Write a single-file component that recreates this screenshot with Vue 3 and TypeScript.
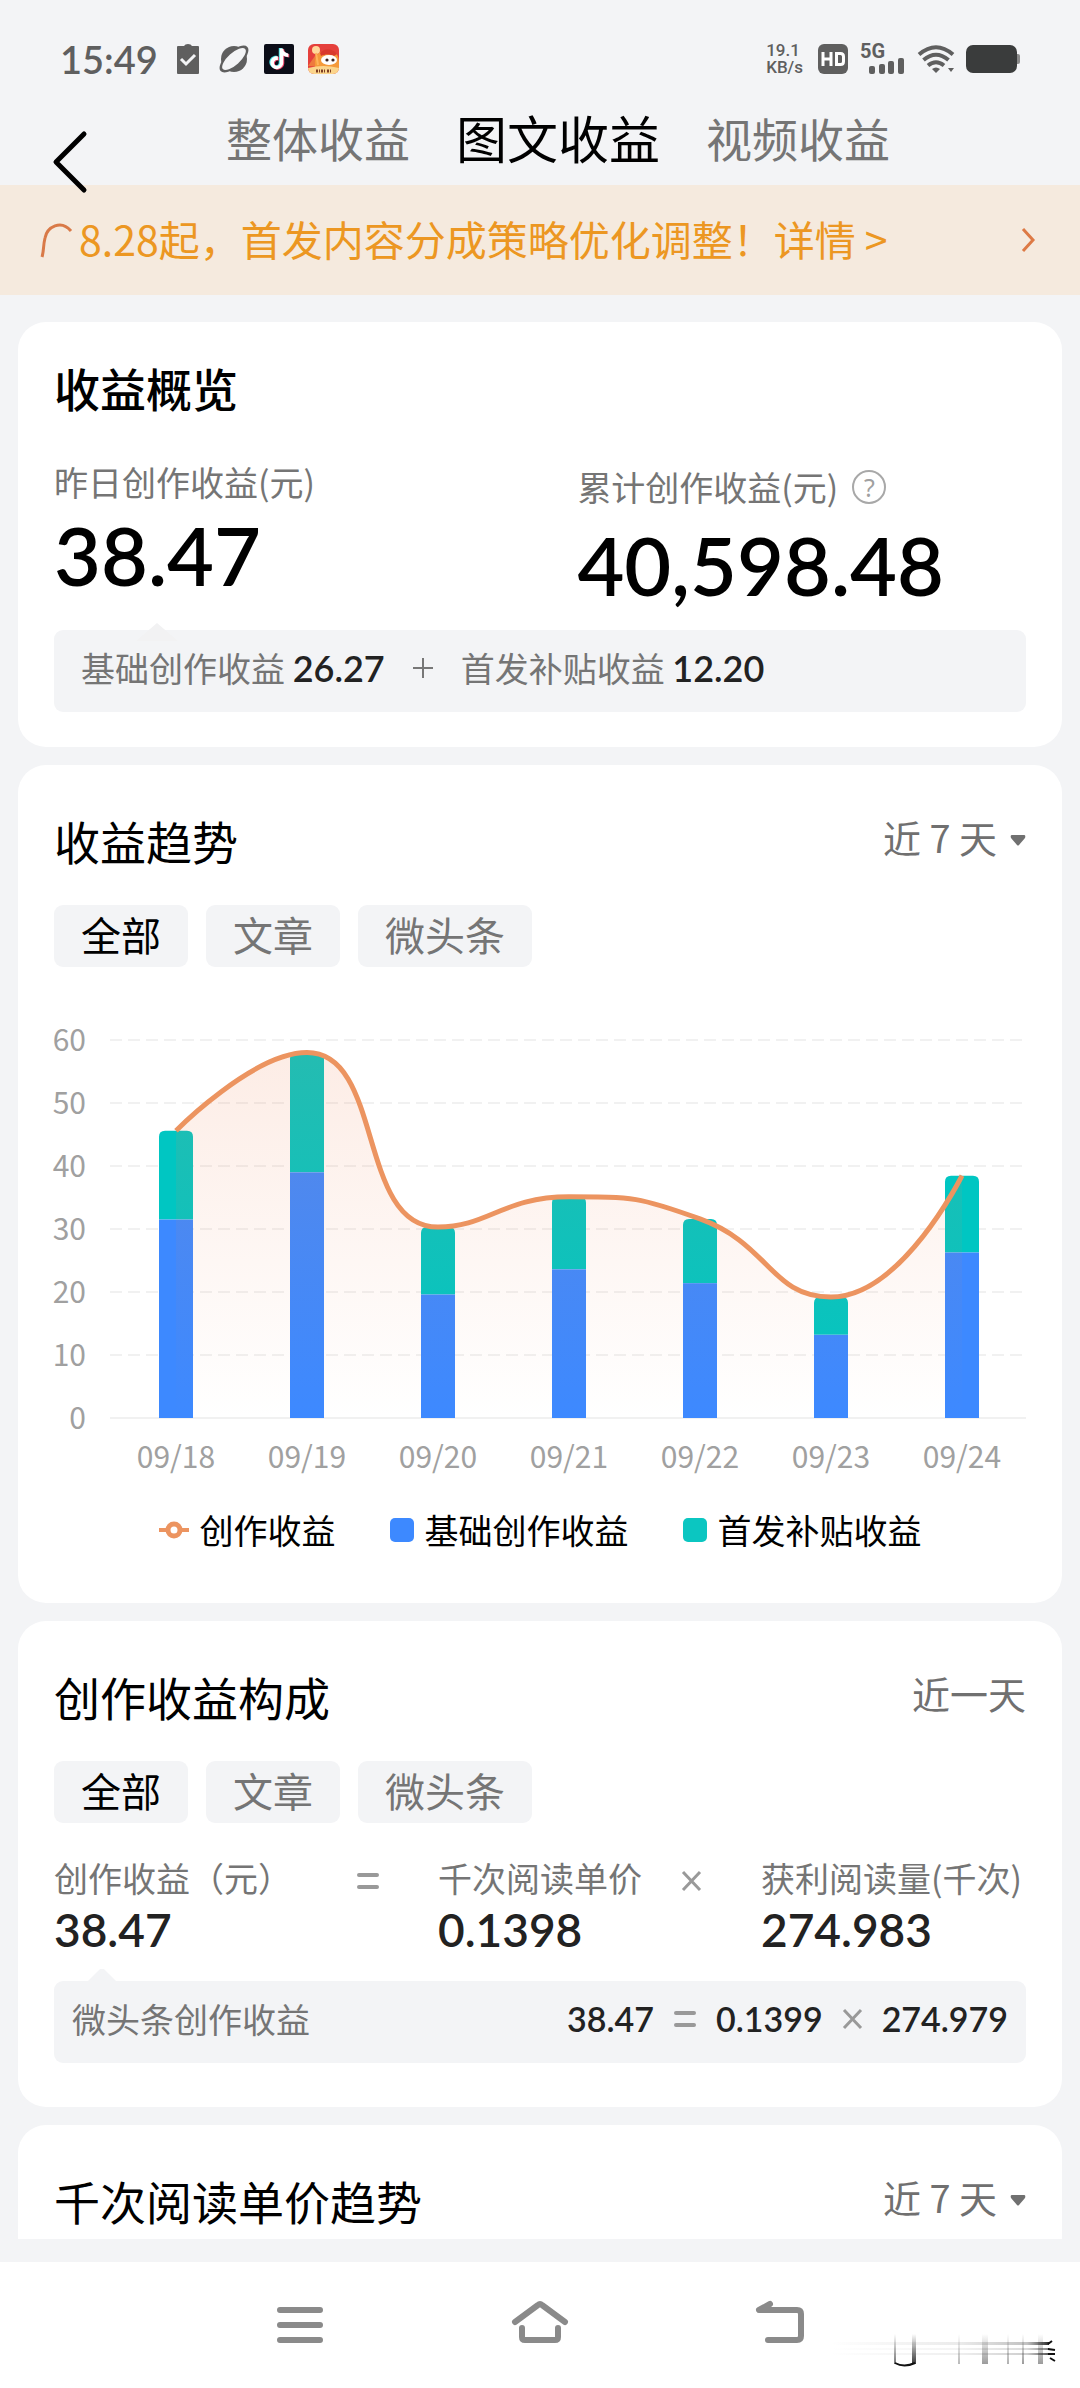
<script setup lang="ts">
import { computed, ref } from 'vue'

interface Day {
  date: string
  base: number
  bonus: number
}

interface Point {
  x: number
  y: number
}

const tabs = ['整体收益', '图文收益', '视频收益']
const activeTab = ref('图文收益')

const kinds = ['全部', '文章', '微头条']
const trendKind = ref('全部')
const mixKind = ref('全部')
const trendRange = ref('7')
const priceRange = ref('7')

const days: Day[] = [
  { date: '09/18', base: 31.5, bonus: 14.1 },
  { date: '09/19', base: 39, bonus: 19 },
  { date: '09/20', base: 19.6, bonus: 10.7 },
  { date: '09/21', base: 23.6, bonus: 11.5 },
  { date: '09/22', base: 21.4, bonus: 10.2 },
  { date: '09/23', base: 13.2, bonus: 6 },
  { date: '09/24', base: 26.27, bonus: 12.2 },
]
const ticks = [60, 50, 40, 30, 20, 10]

const floorY = 408
const unit = 6.3
const barWidth = 34
const toY = (value: number): number => floorY - value * unit
const toX = (index: number): number => 122 + index * 131

const points = computed<Point[]>(() =>
  days.map((d, i) => ({ x: toX(i), y: toY(d.base + d.bonus) })),
)

const clamp = (v: number, a: number, b: number): number =>
  Math.min(Math.max(v, Math.min(a, b)), Math.max(a, b))

// Smooth line whose control points never leave the span of the neighbouring values
const linePath = computed<string>(() => {
  const p = points.value
  let out = `M${p[0].x} ${p[0].y}`
  let from: Point = p[0]
  for (let i = 1; i < p.length; i++) {
    const prev = p[i - 1]
    const cur = p[i]
    const next = p[i + 1]
    let before: Point = cur
    let after: Point = cur
    if (next) {
      const lenPrev = Math.hypot(cur.x - prev.x, cur.y - prev.y)
      const lenNext = Math.hypot(next.x - cur.x, next.y - cur.y)
      const ratio = lenNext / (lenNext + lenPrev)
      after = {
        x: clamp(cur.x + (next.x - prev.x) * 0.5 * ratio, cur.x, next.x),
        y: clamp(cur.y + (next.y - prev.y) * 0.5 * ratio, cur.y, next.y),
      }
      before = {
        x: clamp(cur.x - ((after.x - cur.x) * lenPrev) / lenNext, cur.x, prev.x),
        y: clamp(cur.y - ((after.y - cur.y) * lenPrev) / lenNext, cur.y, prev.y),
      }
      after = {
        x: cur.x + ((cur.x - before.x) * lenNext) / lenPrev,
        y: cur.y + ((cur.y - before.y) * lenNext) / lenPrev,
      }
    }
    out += `C${from.x} ${from.y} ${before.x} ${before.y} ${cur.x} ${cur.y}`
    from = after
  }
  return out
})

const areaPath = computed<string>(
  () => `${linePath.value}L${toX(days.length - 1)} ${floorY}L${toX(0)} ${floorY}Z`,
)

const topBar = (d: Day, i: number): string => {
  const x = toX(i) - barWidth / 2
  const top = toY(d.base + d.bonus)
  const bottom = toY(d.base)
  return `M${x} ${bottom}V${top + 6}q0 -6 6 -6h${barWidth - 12}q6 0 6 6V${bottom}Z`
}
</script>

<template>
  <div class="app">
    <div class="status">
      <div class="status-side">
        <span class="clock">15:49</span>
        <svg class="clip" width="22" height="30" viewBox="0 0 22 30" aria-hidden="true">
          <path d="M1 2h6q1-2 4-2t4 2h6q1 0 1 1v26q0 1-1 1H1q-1 0-1-1V3q0-1 1-1z" fill="#5f5f5f" />
          <path d="M4 15l5 5 9-9" fill="none" stroke="#f3f4f6" stroke-width="3" />
        </svg>
        <svg class="planet" width="30" height="30" viewBox="0 0 30 30" aria-hidden="true">
          <circle cx="15" cy="15" r="13" fill="#5f5f5f" />
          <ellipse cx="15" cy="15" rx="18" ry="8" transform="rotate(-42 15 15)" fill="#5f5f5f" />
          <ellipse cx="15" cy="15" rx="15" ry="6" transform="rotate(-42 15 15)" fill="#f3f4f6" />
        </svg>
        <svg class="tok" width="30" height="30" viewBox="0 0 30 30" aria-hidden="true">
          <defs>
            <path
              id="note"
              d="M12.53.02C13.84 0 15.14.01 16.44 0c.08 1.53.63 3.09 1.75 4.17 1.12 1.11 2.7 1.62 4.24 1.79v4.03c-1.44-.05-2.89-.35-4.2-.97-.57-.26-1.1-.59-1.62-.93-.01 2.92.01 5.84-.02 8.75-.08 1.4-.54 2.79-1.35 3.94-1.31 1.92-3.58 3.17-5.91 3.21-1.43.08-2.86-.31-4.08-1.03-2.02-1.19-3.44-3.37-3.65-5.71-.02-.5-.03-1-.01-1.49.18-1.9 1.12-3.72 2.58-4.96 1.66-1.44 3.98-2.13 6.15-1.72.02 1.48-.04 2.96-.04 4.44-.99-.32-2.15-.23-3.02.37-.63.41-1.11 1.04-1.36 1.75-.21.51-.15 1.07-.14 1.61.24 1.64 1.82 3.02 3.5 2.87 1.12-.01 2.19-.66 2.77-1.61.19-.33.4-.67.41-1.06.1-1.79.06-3.57.07-5.36.01-4.03-.01-8.05.02-12.07z"
            />
          </defs>
          <rect width="30" height="30" rx="2" fill="#0b0d18" />
          <use href="#note" transform="translate(4 4) scale(.86)" fill="#4be3e8" />
          <use href="#note" transform="translate(6 5) scale(.86)" fill="#f2456a" />
          <use href="#note" transform="translate(5 4.5) scale(.86)" fill="#fff" />
        </svg>
        <svg width="31" height="30" viewBox="0 0 31 30" aria-hidden="true">
          <defs>
            <clipPath id="tile"><rect width="31" height="30" rx="6" /></clipPath>
          </defs>
          <g clip-path="url(#tile)">
            <rect width="31" height="30" fill="#e5403c" />
            <path d="M0 22L9 9l10 14z" fill="#ee7a3e" />
            <path d="M8 26c-3-10 0-19 10-20 9-1 13 5 13 12v8z" fill="#f59a3a" />
            <path d="M12 9c3-5 13-5 17 1l-3 2c-4-2-9-2-13 0z" fill="#d93a2e" />
            <circle cx="8" cy="6" r="4" fill="#ffd79a" />
            <path d="M8 9l2 12" stroke="#ffb35a" stroke-width="2" />
            <ellipse cx="21" cy="16" rx="8" ry="5" fill="#fff" />
            <circle cx="19" cy="16" r="1.6" fill="#3b2420" />
            <circle cx="25" cy="16" r="1.6" fill="#3b2420" />
            <path d="M0 24q15-4 31 0v6H0z" fill="#fbd58c" />
            <path d="M8 27h4m1 0h4m2 0h4" stroke="#7c3d22" stroke-width="3" stroke-dasharray="2 1" />
          </g>
        </svg>
      </div>
      <div class="status-side">
        <span class="speed"><span>19.1</span><span>KB/s</span></span>
        <svg class="hd" width="30" height="30" viewBox="0 0 30 30" aria-hidden="true">
          <rect width="30" height="30" rx="6" fill="#5f5f5f" />
          <path d="M5 8v14M13 8v14M5 15h8M18.500 9.500h4q3 0 3 3v5q0 3-3 3h-4z" fill="none" stroke="#fff" stroke-width="3" />
        </svg>
        <span class="cell">
          <span class="cell-kind">5G</span>
          <svg class="cell-bars" width="36" height="16" viewBox="0 0 36 16" aria-hidden="true">
            <g fill="#5f5f5f">
              <rect y="8" width="6" height="8" rx="2" />
              <rect x="10" y="6" width="6" height="10" rx="2" />
              <rect x="19" y="3" width="6" height="13" rx="2" />
              <rect x="29" width="6" height="16" rx="2" />
            </g>
          </svg>
        </span>
        <svg class="wifi" width="36" height="28" viewBox="0 0 36 28" aria-hidden="true">
          <g fill="none" stroke="#5f5f5f" stroke-width="4">
            <path d="M1 9.500Q18-5 35 9.500" />
            <path d="M5.500 15Q18 4.500 30.500 15" />
            <path d="M10 20.500Q18 14 26 20.500" />
          </g>
          <path d="M14 24q4-3 8 0l-4 4zM30 23h6l-3 4z" fill="#5f5f5f" />
        </svg>
        <svg width="54" height="28" viewBox="0 0 54 28" aria-hidden="true">
          <rect x="49" y="9" width="5" height="10" rx="2" fill="#8a8a8a" />
          <rect width="51" height="28" rx="7" fill="#3a3c3c" />
        </svg>
      </div>
    </div>

    <header class="head">
      <button class="back" type="button" aria-label="返回">
        <svg width="34" height="62" viewBox="0 0 34 62" aria-hidden="true">
          <path d="M31 3L3 31l28 28" fill="none" stroke="#000" stroke-width="5" stroke-linecap="round" stroke-linejoin="round" />
        </svg>
      </button>
      <nav class="tabs">
        <button
          v-for="tab in tabs"
          :key="tab"
          type="button"
          class="tab"
          :class="{ on: tab === activeTab }"
          @click="activeTab = tab"
        >{{ tab }}</button>
      </nav>
    </header>

    <a class="notice" href="#notice">
      <svg width="32" height="36" viewBox="0 0 32 36" aria-hidden="true">
        <path d="M2 35C4 29 3 24 5 16 7 5 21-3 31 9" fill="none" stroke="#d97a48" stroke-width="3" />
      </svg>
      <span class="notice-text">8.28起，首发内容分成策略优化调整！详情 &gt;</span>
      <svg width="14" height="26" viewBox="0 0 14 26" aria-hidden="true">
        <path d="M2 2l10 11L2 24" fill="none" stroke="#dd7a45" stroke-width="3" />
      </svg>
    </a>

    <main class="scroll">
      <section class="card overview">
        <h2 class="title strong">收益概览</h2>
        <div class="totals">
          <div class="total">
            <div class="label">昨日创作收益(元)</div>
            <div class="big">38.47</div>
          </div>
          <div class="total second">
            <div class="label">
              累计创作收益(元)
              <button class="help" type="button" aria-label="说明">?</button>
            </div>
            <div class="big">40,598.48</div>
          </div>
        </div>
        <div class="detail split">
          <span>基础创作收益 <b>26.27</b></span>
          <svg class="plus" width="20" height="20" viewBox="0 0 20 20" aria-hidden="true">
            <path d="M10 0v20M0 10h20" stroke="#777" stroke-width="2" />
          </svg>
          <span>首发补贴收益 <b>12.20</b></span>
        </div>
      </section>

      <section class="card trend">
        <div class="bar">
          <h2 class="title">收益趋势</h2>
          <label class="range">
            <select v-model="trendRange" aria-label="收益趋势时间范围">
              <option value="7">近 7 天</option>
            </select>
            <svg width="16" height="11" viewBox="0 0 16 11" aria-hidden="true">
              <path d="M2 0h12q2 0 1 3L9 10q-1 1-2 0L1 3Q0 0 2 0z" fill="#707070" />
            </svg>
          </label>
        </div>
        <div class="chips">
          <button
            v-for="kind in kinds"
            :key="kind"
            type="button"
            class="chip"
            :class="{ on: kind === trendKind }"
            @click="trendKind = kind"
          >{{ kind }}</button>
        </div>
        <svg class="chart" viewBox="0 0 972 470" role="img" aria-label="收益趋势">
          <defs>
            <linearGradient id="fade" x1="0" y1="0" x2="0" y2="1">
              <stop offset="0" stop-color="#ef8354" stop-opacity=".15" />
              <stop offset="1" stop-color="#ef8354" stop-opacity="0" />
            </linearGradient>
          </defs>
          <g v-for="tick in ticks" :key="tick">
            <path :d="`M56 ${toY(tick)}H968`" stroke="#f1f1f1" stroke-width="2" stroke-dasharray="12 6" />
            <text class="axis" x="32" :y="toY(tick) + 11" text-anchor="end">{{ tick }}</text>
          </g>
          <text class="axis" x="32" :y="floorY + 11" text-anchor="end">0</text>
          <path :d="`M56 ${floorY}H972`" stroke="#f1f1f1" stroke-width="2" />
          <g v-for="(day, i) in days" :key="day.date">
            <path :d="topBar(day, i)" fill="#00c6c2" />
            <rect
              :x="toX(i) - barWidth / 2"
              :y="toY(day.base)"
              :width="barWidth"
              :height="floorY - toY(day.base)"
              fill="#3d89ff"
            />
            <text class="axis" :x="toX(i)" y="458" text-anchor="middle">{{ day.date }}</text>
          </g>
          <path :d="areaPath" fill="url(#fade)" />
          <path :d="linePath" fill="none" stroke="#ec9460" stroke-width="5" stroke-linejoin="bevel" />
        </svg>
        <div class="legend">
          <span class="key">
            <svg width="30" height="18" viewBox="0 0 30 18" aria-hidden="true">
              <path d="M0 9h30" stroke="#ec9460" stroke-width="4" />
              <circle cx="15" cy="9" r="6" fill="#fff" stroke="#ec9460" stroke-width="5" />
            </svg>
            创作收益
          </span>
          <span class="key"><i class="swatch base"></i>基础创作收益</span>
          <span class="key"><i class="swatch bonus"></i>首发补贴收益</span>
        </div>
      </section>

      <section class="card mix">
        <div class="bar">
          <h2 class="title">创作收益构成</h2>
          <span class="period">近一天</span>
        </div>
        <div class="chips">
          <button
            v-for="kind in kinds"
            :key="kind"
            type="button"
            class="chip"
            :class="{ on: kind === mixKind }"
            @click="mixKind = kind"
          >{{ kind }}</button>
        </div>
        <div class="formula">
          <div>
            <div class="label">创作收益（元）</div>
            <div class="value">38.47</div>
          </div>
          <svg class="op" width="22" height="18" viewBox="0 0 22 18" aria-hidden="true">
            <path d="M2 3h18M2 15h18" stroke="#999" stroke-width="4" stroke-linecap="round" />
          </svg>
          <div>
            <div class="label">千次阅读单价</div>
            <div class="value">0.1398</div>
          </div>
          <svg class="op" width="19" height="18" viewBox="0 0 19 18" aria-hidden="true">
            <path d="M1 0l17 18M18 0L1 18" stroke="#999" stroke-width="3" />
          </svg>
          <div>
            <div class="label">获利阅读量(千次)</div>
            <div class="value">274.983</div>
          </div>
        </div>
        <div class="detail row">
          <span>微头条创作收益</span>
          <span class="sum">
            <b>38.47</b>
            <svg width="22" height="18" viewBox="0 0 22 18" aria-hidden="true">
              <path d="M2 3h18M2 15h18" stroke="#999" stroke-width="4" stroke-linecap="round" />
            </svg>
            <b>0.1399</b>
            <svg width="19" height="18" viewBox="0 0 19 18" aria-hidden="true">
              <path d="M1 0l17 18M18 0L1 18" stroke="#999" stroke-width="3" />
            </svg>
            <b>274.979</b>
          </span>
        </div>
      </section>

      <section class="card price">
        <div class="bar">
          <h2 class="title">千次阅读单价趋势</h2>
          <label class="range">
            <select v-model="priceRange" aria-label="千次阅读单价趋势时间范围">
              <option value="7">近 7 天</option>
            </select>
            <svg width="16" height="11" viewBox="0 0 16 11" aria-hidden="true">
              <path d="M2 0h12q2 0 1 3L9 10q-1 1-2 0L1 3Q0 0 2 0z" fill="#707070" />
            </svg>
          </label>
        </div>
      </section>
    </main>

    <footer class="system">
      <button type="button" aria-label="最近任务">
        <svg width="58" height="46" viewBox="0 0 58 46" aria-hidden="true">
          <path d="M9 8h40M9 23h40M9 38h40" stroke="#8a8a8a" stroke-width="6" stroke-linecap="round" />
        </svg>
      </button>
      <button type="button" aria-label="主屏幕">
        <svg width="58" height="46" viewBox="0 0 58 46" aria-hidden="true">
          <g fill="none" stroke="#8a8a8a" stroke-width="6" stroke-linecap="round" stroke-linejoin="round">
            <path d="M4 20L27 3q2-2 4 0l23 17" />
            <path d="M11 26v9q0 3 3 3h30q3 0 3-3v-9" />
          </g>
        </svg>
      </button>
      <button type="button" aria-label="返回上一级">
        <svg width="58" height="46" viewBox="0 0 58 46" aria-hidden="true">
          <g fill="none" stroke="#8a8a8a" stroke-width="6" stroke-linecap="round" stroke-linejoin="round">
            <path d="M19 2L8 8h38q4 0 4 4v22q0 4-4 4H17" />
          </g>
        </svg>
      </button>
      <svg class="trace" width="230" height="36" viewBox="0 0 230 36" aria-hidden="true">
        <defs>
          <linearGradient id="down" x1="0" y1="0" x2="0" y2="1">
            <stop offset="0" stop-color="#222" stop-opacity="0" />
            <stop offset="1" stop-color="#222" stop-opacity=".9" />
          </linearGradient>
          <linearGradient id="across" x1="0" y1="0" x2="1" y2="0">
            <stop offset="0" stop-color="#333" stop-opacity="0" />
            <stop offset=".6" stop-color="#333" stop-opacity=".1" />
            <stop offset=".9" stop-color="#333" stop-opacity=".3" />
            <stop offset="1" stop-color="#111" stop-opacity=".9" />
          </linearGradient>
        </defs>
        <g fill="url(#down)">
          <rect x="68" y="2" width="2" height="30" opacity=".7" />
          <rect x="86" y="2" width="4" height="30" />
          <rect x="132" y="2" width="2" height="30" opacity=".35" />
          <rect x="156" y="2" width="6" height="30" opacity=".5" />
          <rect x="181" y="2" width="2" height="30" opacity=".4" />
          <rect x="196" y="2" width="2" height="30" opacity=".5" />
          <rect x="212" y="2" width="5" height="30" opacity=".5" />
        </g>
        <g fill="url(#across)">
          <rect x="4" y="10" width="219" height="3" />
          <rect x="4" y="16" width="219" height="2" opacity=".6" />
          <rect x="4" y="21" width="219" height="2" opacity=".8" />
        </g>
        <path d="M69 31q9 5 20 0M222 12l4-3M222 17l7 1M222 22h7M224 26l5 3" fill="none" stroke="#111" stroke-width="2" />
      </svg>
    </footer>
  </div>
</template>

<style>
body {
  margin: 0;
  background: #f3f4f6;
}
</style>

<style scoped>
.app {
  display: flex;
  flex-direction: column;
  height: 100vh;
  background: #f3f4f6;
  color: #000;
  font-family: 'Noto Sans CJK SC', 'Noto Sans', sans-serif;
}

button,
select {
  padding: 0;
  border: 0;
  background: none;
  color: inherit;
  font: inherit;
  cursor: pointer;
}

svg {
  display: block;
  flex: none;
  overflow: visible;
}

.status {
  display: flex;
  justify-content: space-between;
  padding: 40px 60px 10px;
  color: #5f5f5f;
}

.status-side {
  display: flex;
  align-items: center;
  height: 38px;
}

.clock {
  margin-right: 19px;
  font-family: Lato, sans-serif;
  font-size: 38px;
  font-weight: 600;
  line-height: 38px;
}

.clip {
  margin-right: 20px;
}

.planet {
  margin-right: 15px;
  overflow: hidden;
}

.tok {
  margin-right: 14px;
}

.speed {
  display: flex;
  flex-direction: column;
  margin-right: 15px;
  font-family: Roboto, sans-serif;
  font-size: 17px;
  font-weight: 500;
  line-height: 17px;
}

.hd {
  margin-right: 12px;
}

.cell {
  display: flex;
  flex-direction: column;
  margin-right: 13px;
}

.cell-kind {
  font-family: Roboto, sans-serif;
  font-size: 20px;
  font-weight: 700;
  line-height: 14px;
}

.cell-bars {
  margin-left: 9px;
}

.wifi {
  margin-right: 12px;
}

.head {
  position: relative;
  display: flex;
  justify-content: center;
  height: 97px;
  padding-left: 36px;
}

.back {
  position: absolute;
  top: 43px;
  left: 53px;
}

.tabs {
  display: flex;
  align-items: center;
  gap: 46px;
}

.tab {
  color: #757575;
  font-size: 46px;
  line-height: 60px;
}

.tab.on {
  color: #000;
  font-size: 51px;
}

.notice {
  display: flex;
  align-items: center;
  height: 110px;
  padding: 0 45px 0 40px;
  background: #f5eade;
  color: #ec9722;
  text-decoration: none;
}

.notice-text {
  flex: 1;
  padding: 0 0 4px 7px;
  font-size: 41px;
  line-height: 50px;
}

.scroll {
  flex: 1;
  min-height: 0;
  padding: 27px 18px 0;
  overflow-y: auto;
  scrollbar-width: none;
}

.card {
  margin-bottom: 18px;
  padding: 46px 36px;
  border-radius: 28px;
  background: #fff;
}

.overview {
  padding: 36px 36px 35px;
}

.trend {
  padding-bottom: 51px;
}

.mix {
  padding-bottom: 44px;
}

.title {
  margin: 0;
  font-size: 46px;
  font-weight: 400;
  line-height: 58px;
}

.title.strong {
  font-weight: 500;
}

.label {
  display: flex;
  align-items: center;
  color: #757575;
  font-size: 34px;
  line-height: 44px;
  white-space: nowrap;
}

.totals {
  display: grid;
  grid-template-columns: 7fr 6fr;
  margin-top: 44px;
}

.total {
  display: flex;
  flex-direction: column;
  gap: 11px;
}

.second {
  gap: 16px;
  padding-top: 5px;
}

.big {
  font-family: Lato, sans-serif;
  font-size: 81px;
  font-weight: 600;
  line-height: 80px;
}

.help {
  box-sizing: border-box;
  width: 34px;
  height: 34px;
  margin-left: 14px;
  border: 2px solid #a8a8a8;
  border-radius: 50%;
  color: #a0a0a0;
  font-family: 'Noto Sans', sans-serif;
  font-size: 25px;
  line-height: 30px;
}

.detail {
  position: relative;
  display: flex;
  align-items: center;
  box-sizing: border-box;
  height: 82px;
  padding-bottom: 6px;
  border-radius: 9px;
  background: #f3f4f6;
  color: #757575;
  font-size: 34px;
  line-height: 44px;
}

.detail::before {
  position: absolute;
  content: '';
}

.detail b {
  color: #222;
  font-family: Lato, sans-serif;
  font-size: 36px;
  font-weight: 600;
}

.split {
  margin-top: 25px;
  padding-left: 27px;
}

.split::before {
  top: -7px;
  left: 82px;
  width: 42px;
  height: 18px;
  background: #f2f2f3;
  clip-path: polygon(50% 0, 100% 100%, 0 100%);
}

.plus {
  margin: 0 28px;
}

.row {
  justify-content: space-between;
  margin-top: 25px;
  padding-right: 18px;
  padding-left: 18px;
}

.row::before {
  top: -12px;
  left: 34px;
  width: 28px;
  height: 12px;
  background: #f3f4f6;
  clip-path: polygon(43% 0, 57% 0, 100% 100%, 0 100%);
}

.sum {
  display: flex;
  align-items: center;
  gap: 20px;
}

.sum b {
  font-size: 34px;
}

.bar {
  display: flex;
  align-items: center;
  justify-content: space-between;
}

.range,
.period {
  display: flex;
  align-items: center;
  padding-bottom: 6px;
  color: #707070;
  font-size: 38px;
  line-height: 48px;
}

.range {
  gap: 12px;
}

.range select {
  height: 48px;
  appearance: none;
}

.range svg {
  margin-top: 6px;
}

.chips {
  display: flex;
  gap: 18px;
  margin-top: 36px;
}

.chip {
  height: 62px;
  padding: 0 27px 4px;
  border-radius: 9px;
  background: #f3f4f6;
  color: #757575;
  font-size: 40px;
  line-height: 58px;
}

.chip.on {
  color: #000;
}

.chart {
  width: 100%;
  margin-top: 43px;
}

.axis {
  fill: #a0a0a0;
  font-size: 30px;
}

.legend {
  display: flex;
  justify-content: center;
  gap: 54px;
  margin-top: 28px;
  font-size: 34px;
  line-height: 44px;
}

.key {
  display: flex;
  align-items: center;
  gap: 11px;
}

.swatch {
  width: 24px;
  height: 24px;
  border-radius: 5px;
}

.swatch.base {
  background: #3d89ff;
}

.swatch.bonus {
  background: #0bc6c1;
}

.formula {
  display: grid;
  grid-template-columns: 303fr 81fr 244fr 79fr 265fr;
  margin-top: 33px;
}

.op {
  margin-top: 16px;
}

.value {
  margin-top: 4px;
  color: #222;
  font-family: Lato, sans-serif;
  font-size: 46px;
  font-weight: 600;
  line-height: 52px;
}

.system {
  position: relative;
  display: flex;
  flex: none;
  justify-content: center;
  gap: 182px;
  margin-top: 23px;
  height: 126px;
  background: #fff;
}

.system button {
  height: 46px;
  margin-top: 40px;
}

.trace {
  position: absolute;
  right: 24px;
  bottom: 20px;
}
</style>
